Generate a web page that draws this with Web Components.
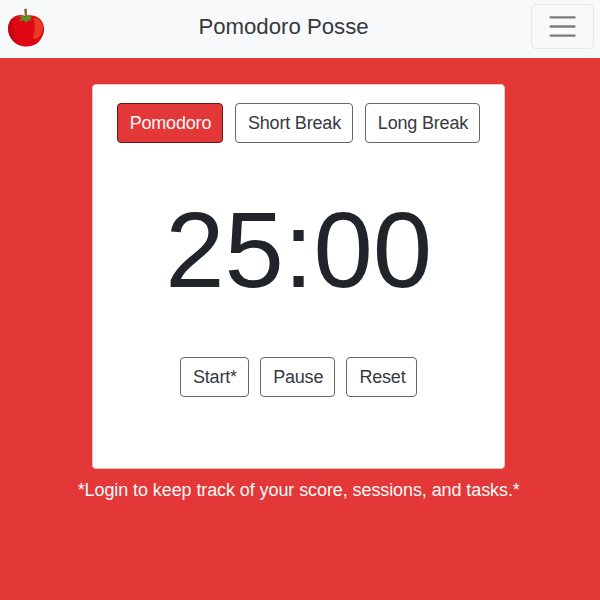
<!DOCTYPE html>
<html lang="en">
<head>
<meta charset="utf-8">
<title>Pomodoro Posse</title>
<style>
html, body { margin: 0; height: 100%; }
body { font-family: "Liberation Sans", Arial, sans-serif; font-size: 18px; letter-spacing: -.09px; color: #212529; background: #e43737; overflow: hidden; }
</style>
</head>
<body>
<pomodoro-app></pomodoro-app>
<script>
const define = (name, html) => {
  const t = document.createElement('template');
  t.innerHTML = html;
  customElements.define(name, class extends HTMLElement {
    constructor() {
      super();
      this.attachShadow({ mode: 'open' }).append(t.content.cloneNode(true));
    }
  });
};

define('tomato-logo', `
<style>:host { display: block; width: 38px; height: 40px; } svg { display: block; }</style>
<svg width="38" height="40" viewBox="0 0 38 40">
  <path d="M18 8C12 5.500 5 8.500 2.500 14C-.5 20 1 28 6 33C10 37 14 38.500 20 38.500C27 38.500 32 35 35 29C38.500 23 37.500 15 32.500 10.500C28 7 22 6.500 18 8Z" fill="#de0712"/>
  <path d="M26 10C31 9 35 14 36 19C36.500 25 32 31 27 31C25 30 27 27 27.500 23C28 18 28 13 26 10Z" fill="#ea3a24"/>
  <path d="M7 10C1 13 0 21 2.500 27C4 31 8 35 13 37C7 30 4 19 7 10Z" fill="#c20716"/>
  <path d="M17 8.500C15 7 14 7 12 9L15 9.500L12 13.500L17 12L19 15L21 12L24.500 13.500L23 10.500L25 9.500L23 7.500L20 8Z" fill="#5a9423"/>
  <path d="M17.200 1L19.800 .7L20 9L18 9Z" fill="#8a5a2d"/>
</svg>`);

define('menu-toggle', `
<style>
:host { display: block; }
button { box-sizing: border-box; width: 63px; height: 45px; display: grid; place-items: center; padding: 0; background: transparent; border: 1.5px solid #e6e8ea; border-radius: 5px; }
svg { display: block; }
</style>
<button aria-label="Toggle navigation"><svg width="35" height="35" viewBox="0 0 30 30"><path stroke="rgba(0,0,0,.5)" stroke-linecap="round" stroke-width="2" d="M4.800 7.200h20.500M4.800 15h20.500M4.800 22.800h20.500"/></svg></button>`);

define('nav-bar', `
<style>
:host { box-sizing: border-box; display: flex; justify-content: space-between; align-items: flex-start; height: 57.500px; padding: 4px 6px 0 7px; background: #f8f9fa; }
tomato-logo { margin-top: 4px; }
.title { font-size: 22.200px; letter-spacing: 0; line-height: 32px; padding-top: 7px; color: #343a40; margin-right: 9px; white-space: nowrap; }
</style>
<tomato-logo></tomato-logo><div class="title"><slot></slot></div><menu-toggle></menu-toggle>`);

define('timer-button', `
<style>
:host { display: block; }
button { box-sizing: border-box; width: 100%; height: 40px; padding: 1px 0 0 1px; font: inherit; letter-spacing: inherit; color: #343a40; white-space: nowrap; background: #fff; border: 1px solid #666; border-radius: 4px; }
:host([active]) button { color: #f8f9fa; background: #e43737; border-color: #61191b; }
</style>
<button><slot></slot></button>`);

define('timer-card', `
<style>
:host { box-sizing: border-box; display: block; width: 412.500px; height: 385px; padding: 18px 23px 0; background: #fff; border: 1px solid #e7c5c5; border-radius: 4px; }
.row { display: flex; justify-content: center; gap: 11.500px; letter-spacing: -.18px; }
.modes { margin-right: .5px; }
.time { margin: 47px 0 47px; height: 120px; line-height: 120px; font-size: 106.700px; letter-spacing: 0; text-align: center; }
</style>
<div class="row modes">
<timer-button active style="width:106.500px">Pomodoro</timer-button><timer-button style="width:118.500px">Short Break</timer-button><timer-button style="width:115.500px">Long Break</timer-button>
</div>
<div class="time">25:00</div>
<div class="row">
<timer-button style="width:69px">Start*</timer-button><timer-button style="width:74.500px">Pause</timer-button><timer-button style="width:71px">Reset</timer-button>
</div>`);

define('pomodoro-app', `
<style>
:host { display: block; height: 100%; }
main { display: flex; flex-direction: column; align-items: center; padding-top: 26.500px; padding-right: 2.600px; }
p { margin: 8px 0 0; line-height: 26px; color: #f8f9fa; white-space: nowrap; }
</style>
<nav-bar>Pomodoro Posse</nav-bar>
<main><timer-card></timer-card><p>*Login to keep track of your score, sessions, and tasks.*</p></main>`);
</script>
</body>
</html>
